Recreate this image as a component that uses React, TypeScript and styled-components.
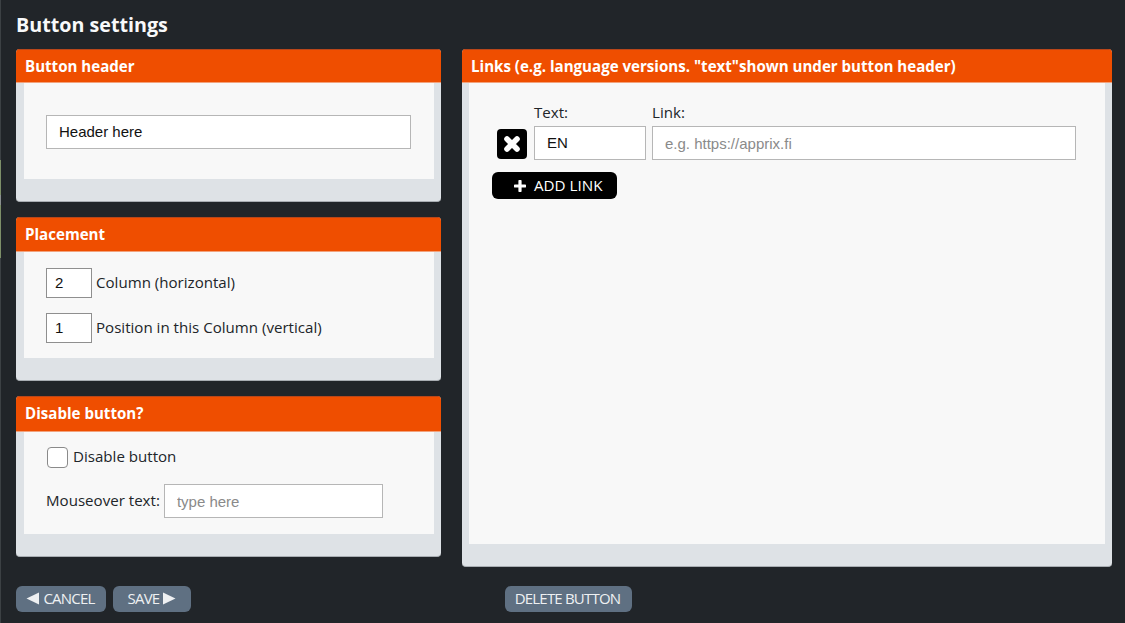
import React from "react";
import styled, { createGlobalStyle } from "styled-components";

const Global = createGlobalStyle`
  html, body { margin: 0; padding: 0; background: #212529; }
  * { box-sizing: border-box; }
  input::placeholder { color: #8a8a8a; opacity: 1; }
`;

const Page = styled.div`
  width: 1125px;
  height: 623px;
  overflow: hidden;
  background: #212529;
  border-left: 1px solid #3c4144;
  border-image: linear-gradient(
      to bottom,
      #3c4144 0 160px,
      #7d8f68 160px 195px,
      #8a8f90 195px 205px,
      #7d8f68 205px 258px,
      #3c4144 258px
    )
    1;
  padding: 13px 13px 0 15px;
  font-family: "Open Sans", sans-serif;
  display: flex;
  flex-direction: column;
`;

const Title = styled.h1`
  margin: 0;
  height: 36px;
  font-size: 19.7px;
  line-height: 23px;
  font-weight: 700;
  color: #f8f9fa;
`;

const Columns = styled.div`
  display: flex;
  gap: 21px;
  align-items: flex-start;
`;

const LeftColumn = styled.div`
  width: 425px;
  display: flex;
  flex-direction: column;
  gap: 15px;
`;

const Card = styled.section<{ $width?: number }>`
  width: ${(p) => (p.$width ? `${p.$width}px` : "100%")};
  background: #dee2e6;
  border-radius: 4px;
  border-bottom: 1px solid #a8adb2;
  overflow: hidden;
  padding-bottom: 22px;
`;

const CardHeader = styled.h2<{ $height: number }>`
  margin: 0;
  height: ${(p) => p.$height}px;
  padding: 0 9px;
  background: #ef4e00;
  color: #fff;
  font-size: 15.1px;
  line-height: 33px;
  font-weight: 700;
  white-space: nowrap;
  border-top: 1px solid #b8461a;
  border-bottom: 1px solid #f2a27c;
`;

const CardBody = styled.div<{ $height: number; $left?: number }>`
  margin: 0 7px 0 ${(p) => p.$left ?? 8}px;
  height: ${(p) => p.$height}px;
  background: #f8f8f8;
  color: #212529;
  font-size: 15.1px;
`;

const HeaderBody = styled(CardBody)`
  padding: 32px 23px 0 22px;
`;

const PlacementBody = styled(CardBody)`
  padding: 16px 22px 0;
  display: flex;
  flex-direction: column;
  gap: 15px;
`;

const DisableBody = styled(CardBody)`
  padding: 15px 22px 0;
  display: flex;
  flex-direction: column;
  gap: 16px;
`;

const LinksBody = styled(CardBody)`
  padding: 19px 28px 0 23px;
`;

const TextInput = styled.input<{ $width?: number }>`
  display: block;
  width: ${(p) => (p.$width ? `${p.$width}px` : "100%")};
  height: 34px;
  padding: 0 12px;
  border: 1px solid #b6b6b6;
  border-radius: 0;
  background: #fff;
  color: #111;
  font-family: "Liberation Sans", Arial, sans-serif;
  font-size: 15px;
  outline: none;
`;

const ValueInput = styled(TextInput)`
  padding-bottom: 2px;
`;

const NumberInput = styled(ValueInput)`
  width: 46px;
  height: 30px;
  padding-left: 8px;
  padding-right: 8px;
  border-color: #8f8f8f;
`;

const Row = styled.label`
  display: flex;
  align-items: center;
  gap: 4px;
  line-height: 24px;
`;

const RowText = styled.span`
  padding-bottom: 2px;
`;

const CheckRow = styled.label`
  display: flex;
  align-items: center;
  gap: 5px;
  height: 21px;
  padding-left: 1px;
  line-height: 19px;
`;

const CheckBox = styled.span`
  width: 21px;
  height: 21px;
  background: #fff;
  border: 1px solid #8a8a8a;
  border-radius: 4px;
`;

const LinkGrid = styled.div`
  display: grid;
  grid-template-columns: 31px 112px 424px;
  grid-template-rows: 20px 34px;
  column-gap: 6px;
  row-gap: 4px;
  padding-left: 5px;
  align-items: center;
`;

const ColumnLabel = styled.div<{ $column: number }>`
  grid-row: 1;
  grid-column: ${(p) => p.$column};
  line-height: 20px;
  height: 20px;
`;

const RemoveButton = styled.button`
  grid-row: 2;
  grid-column: 1;
  width: 30px;
  height: 30px;
  margin-top: 2px;
  padding: 0;
  border: 0;
  border-radius: 4px;
  background: #000;
  display: flex;
  align-items: center;
  justify-content: center;
`;

const LinkText = styled(ValueInput)`
  grid-row: 2;
  grid-column: 2;
`;

const LinkUrl = styled(TextInput)`
  grid-row: 2;
  grid-column: 3;
`;

const AddLink = styled.button`
  margin-top: 12px;
  width: 125px;
  height: 27px;
  padding: 0 0 0 22px;
  border: 0;
  border-radius: 6px;
  background: #000;
  color: #fff;
  font-family: "Open Sans", sans-serif;
  font-size: 15.2px;
  display: flex;
  align-items: center;
  gap: 8px;
`;

const AddLinkText = styled.span`
  padding-bottom: 2px;
`;

const Footer = styled.div`
  margin-top: 19px;
  display: flex;
  gap: 7px;
`;

const FooterButton = styled.button<{ $width: number; $offset?: number; $shift?: number }>`
  width: ${(p) => p.$width}px;
  margin-left: ${(p) => p.$offset ?? 0}px;
  height: 26px;
  padding: 0 ${(p) => p.$shift ?? 2}px 2px 0;
  border: 0;
  border-radius: 6px;
  background: #5f7082;
  color: #eef0f2;
  font-family: "Open Sans", sans-serif;
  font-size: 15px;
  letter-spacing: -0.8px;
  display: flex;
  align-items: center;
  justify-content: center;
  gap: 4px;
`;

const Arrow = ({ left }: { left?: boolean }) => (
  <svg width="13" height="13" viewBox="0 0 13 13" aria-hidden="true">
    <path d={left ? "M13 0.5V12.5L0.5 6.5Z" : "M0 0.5V12.5L12.5 6.5Z"} fill="#eef0f2" />
  </svg>
);

export default function App() {
  return (
    <Page>
      <Global />
      <Title>Button settings</Title>
      <Columns>
        <LeftColumn>
          <Card>
            <CardHeader $height={34}>Button header</CardHeader>
            <HeaderBody $height={96}>
              <ValueInput defaultValue="Header here" />
            </HeaderBody>
          </Card>
          <Card>
            <CardHeader $height={35}>Placement</CardHeader>
            <PlacementBody $height={106}>
              <Row>
                <NumberInput defaultValue="2" />
                <RowText>Column (horizontal)</RowText>
              </Row>
              <Row>
                <NumberInput defaultValue="1" />
                <RowText>Position in this Column (vertical)</RowText>
              </Row>
            </PlacementBody>
          </Card>
          <Card>
            <CardHeader $height={36}>Disable button?</CardHeader>
            <DisableBody $height={102}>
              <CheckRow>
                <CheckBox />
                <RowText>Disable button</RowText>
              </CheckRow>
              <Row>
                <RowText>Mouseover text:</RowText>
                <TextInput $width={219} placeholder="type here" />
              </Row>
            </DisableBody>
          </Card>
        </LeftColumn>
        <Card $width={650}>
          <CardHeader $height={34}>
            Links (e.g. language versions. "text"shown under button header)
          </CardHeader>
          <LinksBody $height={461} $left={7}>
            <LinkGrid>
              <ColumnLabel $column={2}>Text:</ColumnLabel>
              <ColumnLabel $column={3}>Link:</ColumnLabel>
              <RemoveButton aria-label="Remove link">
                <svg width="20" height="20" viewBox="0 0 20 20" aria-hidden="true">
                  <path d="M5 5L15 15M15 5L5 15" stroke="#fff" strokeWidth="5.6" strokeLinecap="round" />
                </svg>
              </RemoveButton>
              <LinkText defaultValue="EN" />
              <LinkUrl placeholder="e.g. https://apprix.fi" />
            </LinkGrid>
            <AddLink>
              <svg width="12" height="12" viewBox="0 0 12 12" aria-hidden="true">
                <path d="M6 1.2V10.8M1.2 6H10.8" stroke="#fff" strokeWidth="3.2" strokeLinecap="round" />
              </svg>
              <AddLinkText>ADD LINK</AddLinkText>
            </AddLink>
          </LinksBody>
        </Card>
      </Columns>
      <Footer>
        <FooterButton $width={90} $shift={1}>
          <Arrow left />
          CANCEL
        </FooterButton>
        <FooterButton $width={78} $shift={0}>
          SAVE
          <Arrow />
        </FooterButton>
        <FooterButton $width={127} $offset={307}>
          DELETE BUTTON
        </FooterButton>
      </Footer>
    </Page>
  );
}
